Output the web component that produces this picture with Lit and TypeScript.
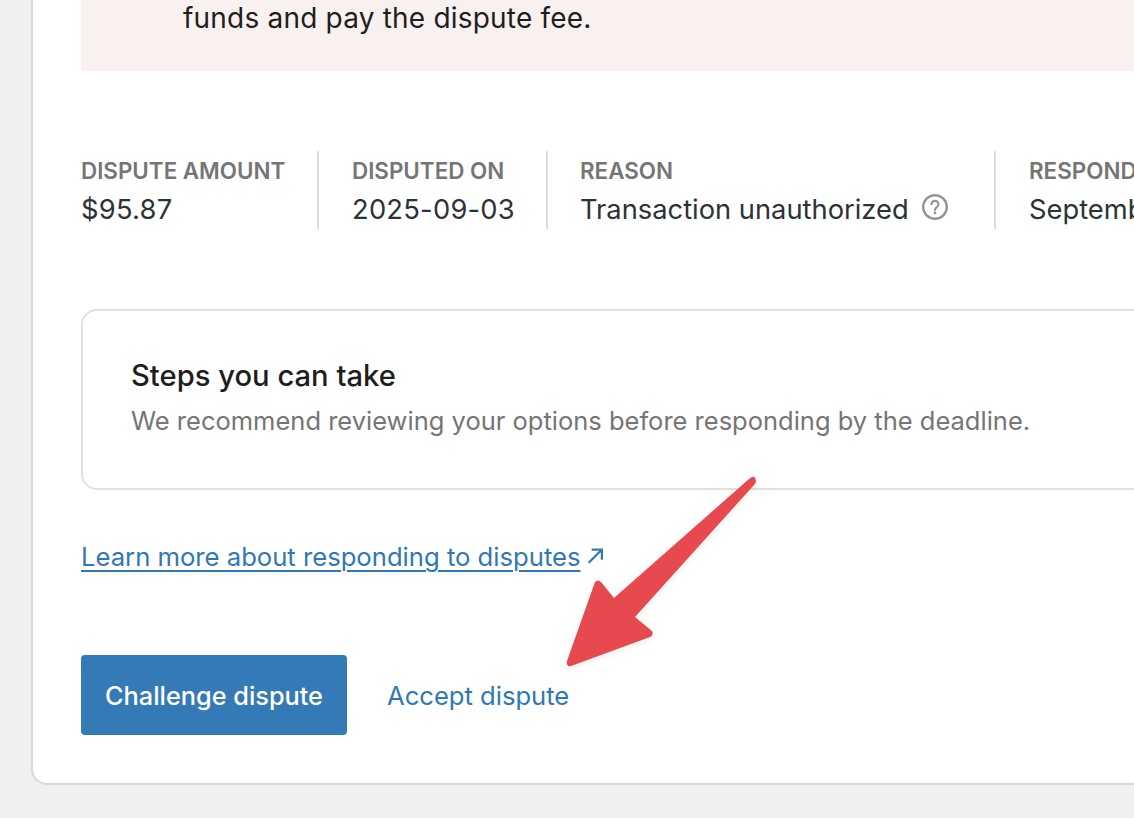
import { LitElement, html, css } from "lit";
import { customElement } from "lit/decorators.js";

@customElement("app-root")
export class AppRoot extends LitElement {
  static styles = css`
    :host {
      display: block;
      font-family: Inter, "Liberation Sans", sans-serif;
      -webkit-font-smoothing: antialiased;
    }
    .page {
      position: relative;
      height: 818px;
      overflow: hidden;
      background: #f0f0f0;
      display: flex;
      flex-direction: column;
      justify-content: flex-end;
      padding: 0 0 33px 31px;
      box-sizing: border-box;
    }
    .card {
      width: 1300px;
      background: #fff;
      border: 2px solid #d8d8d8;
      border-radius: 0 0 16px 16px;
      border-top: 0;
      padding: 0 0 48px 48px;
      box-sizing: border-box;
    }
    .banner {
      background: #f9f1ef;
      border-radius: 2px;
      padding: 0 0 33px 102px;
      font-size: 28px;
      letter-spacing: 0.2px;
      line-height: 40px;
      color: #1e1e1e;
    }
    .stats {
      display: flex;
      margin-top: 80px;
      height: 78px;
    }
    .stat {
      padding: 0 33px;
      border-left: 2px solid #dcdcdc;
      box-sizing: border-box;
    }
    .stat.amount {
      width: 236px;
      padding-left: 0;
      border-left: 0;
    }
    .stat.date {
      width: 229px;
    }
    .stat.reason { width: 448px; padding-left: 32px; }
    .label {
      font-size: 22.4px;
      font-weight: 600;
      line-height: 28px;
      margin-top: 6px;
      color: #757575;
      white-space: nowrap;
    }
    .value {
      font-size: 27.3px;
      line-height: 36px;
      margin-top: 7px;
      color: #2c3338;
      display: flex;
      align-items: center;
      gap: 12px;
      white-space: nowrap;
    }
    .value.num { letter-spacing: 0.25px; }
    .help { width: 28px; height: 28px; margin-top: -6px; }
    .box {
      margin-top: 80px;
      height: 181px;
      box-sizing: border-box;
      border: 2px solid #e0e0e0;
      border-radius: 16px;
      padding: 47px 48px 0;
    }
    .box h2 {
      margin: 0;
      font-size: 29.2px;
      line-height: 36px;
      font-weight: 500;
      color: #1e1e1e;
    }
    .box p {
      margin: 9px 0 0;
      font-size: 25.5px;
      line-height: 36px;
      color: #757575;
    }
    .learn {
      margin-top: 47px;
      font-size: 25.65px;
      line-height: 40px;
      display: flex;
      align-items: center;
      gap: 6px;
      color: #3078b4;
    }
    .learn a {
      color: inherit;
      text-decoration: underline;
      text-decoration-thickness: 2px;
      text-underline-offset: 4px;
    }
    .learn svg { width: 17px; height: 17px; margin-top: -3px; }
    .actions {
      margin-top: 78px;
      display: flex;
      align-items: center;
      gap: 40px;
    }
    .primary {
      height: 80px;
      width: 266px;
      border: 0;
      border-radius: 4px;
      background: #347ab6;
      color: #fff;
      font: 500 25.3px Inter, sans-serif;
    }
    .secondary { font-size: 25.6px; color: #3078b4; font-weight: 400; }
    .arrow {
      position: absolute;
      left: 560px;
      top: 470px;
      width: 204px;
      height: 204px;
      filter: drop-shadow(0 2px 3px rgba(0,0,0,.08));
    }
  `;

  render() {
    return html`
      <div class="page">
        <div class="card">
          <div class="banner">funds and pay the dispute fee.</div>
          <div class="stats">
            <div class="stat amount">
              <div class="label">DISPUTE AMOUNT</div>
              <div class="value num">$95.87</div>
            </div>
            <div class="stat date">
              <div class="label">DISPUTED ON</div>
              <div class="value num">2025-09-03</div>
            </div>
            <div class="stat reason">
              <div class="label">REASON</div>
              <div class="value">
                Transaction unauthorized
                <svg class="help" viewBox="0 0 28 28" fill="none">
                  <circle cx="14" cy="14" r="11.8" stroke="#949494" stroke-width="2.4" />
                  <path d="M10.6 11.2a3.4 3.4 0 1 1 5.2 2.9c-1.2.8-1.8 1.4-1.8 2.9" stroke="#949494" stroke-width="2.2" stroke-linecap="round" />
                  <circle cx="14" cy="20" r="1.4" fill="#949494" />
                </svg>
              </div>
            </div>
            <div class="stat">
              <div class="label">RESPOND BY</div>
              <div class="value">September 13, 2025</div>
            </div>
          </div>
          <div class="box">
            <h2>Steps you can take</h2>
            <p>We recommend reviewing your options before responding by the deadline.</p>
          </div>
          <div class="learn">
            <a href="#">Learn more about responding to disputes</a>
            <svg viewBox="0 0 20 20" fill="none" stroke="#3078b4" stroke-width="2.6">
              <path d="M2 18.5 17 3.5M5.5 3h12v12" />
            </svg>
          </div>
          <div class="actions">
            <button class="primary">Challenge dispute</button>
            <span class="secondary">Accept dispute</span>
          </div>
        </div>
        <svg class="arrow" viewBox="560 470 204 204">
          <path
            d="M751 477.5 Q755 475 756 481 Q756 483 754 485 L635 617 L652 631 Q654 635 650 637 L571 666 Q566 667 567 661 L595 582 Q598 579 601 582 L614 598 L749 479 Z"
            fill="#e64a4f"
          />
        </svg>
      </div>
    `;
  }
}
